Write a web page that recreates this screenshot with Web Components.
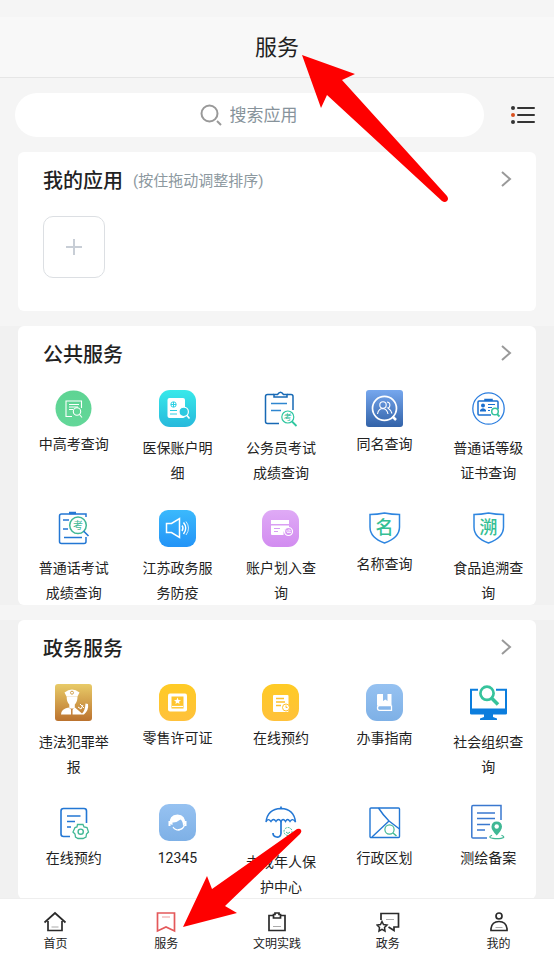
<!DOCTYPE html>
<html lang="zh-CN">
<head>
<meta charset="utf-8">
<meta name="viewport" content="width=device-width, initial-scale=1">
<title>服务</title>
<style>
  html, body {
    margin: 0;
    height: 100%;
  }

  body {
    font-family: Roboto, "Noto Sans CJK SC", sans-serif;
    color: #222;
    background: #f5f5f5;
  }
</style>
</head>
<body>
<service-app>
  <page-header slot="header">服务</page-header>
  <search-bar placeholder="搜索应用"></search-bar>
  <service-card heading="我的应用" hint="(按住拖动调整排序)">
    <add-button></add-button>
  </service-card>
  <service-card heading="公共服务" shaded>
    <app-grid>
      <app-tile icon="exam" label="中高考查询"></app-tile>
      <app-tile icon="medical" label="医保账户明细"></app-tile>
      <app-tile icon="civil" label="公务员考试成绩查询"></app-tile>
      <app-tile icon="people" label="同名查询"></app-tile>
      <app-tile icon="certificate" label="普通话等级证书查询"></app-tile>
      <app-tile icon="mandarin" label="普通话考试成绩查询"></app-tile>
      <app-tile icon="speaker" label="江苏政务服务防疫"></app-tile>
      <app-tile icon="account" label="账户划入查询"></app-tile>
      <app-tile icon="name" label="名称查询"></app-tile>
      <app-tile icon="trace" label="食品追溯查询"></app-tile>
    </app-grid>
  </service-card>
  <service-card heading="政务服务" shaded>
    <app-grid>
      <app-tile icon="police" label="违法犯罪举报"></app-tile>
      <app-tile icon="licence" label="零售许可证"></app-tile>
      <app-tile icon="booking" label="在线预约"></app-tile>
      <app-tile icon="guide" label="办事指南"></app-tile>
      <app-tile icon="monitor" label="社会组织查询"></app-tile>
      <app-tile icon="settings" label="在线预约"></app-tile>
      <app-tile icon="hotline" label="12345"></app-tile>
      <app-tile icon="umbrella" label="未成年人保护中心"></app-tile>
      <app-tile icon="district" label="行政区划"></app-tile>
      <app-tile icon="survey" label="测绘备案"></app-tile>
    </app-grid>
  </service-card>
  <tab-bar slot="footer"></tab-bar>
  <guide-arrows slot="overlay"></guide-arrows>
</service-app>

<script>
const gradient = (id, from, to) => `
  <linearGradient id="${id}" x1="0" y1="0" x2="0" y2="1">
    <stop stop-color="${from}"/><stop offset="1" stop-color="${to}"/>
  </linearGradient>`

const tileBase = (from, to, radius) => `
  ${gradient('bg', from, to)}
  <rect width="37" height="37" rx="${radius}" fill="url(#bg)"/>`

const shield = char => `
  <path d="M4 4.500Q11 4.500 18.500 3Q26 4.500 33.500 4.500V17C33.500 25 27 30 18.500 33C10 30 4 25 4 17Z" stroke="#2f86e0" stroke-width="1.500"/>
  <text x="18.500" y="24" font-size="18" font-weight="500" text-anchor="middle" fill="#35bf94">${char}</text>`

// tile icons, drawn on a 37x37 grid
const ICONS = {
  exam: `
    ${gradient('bg', '#5ed493', '#63d799')}
    <circle cx="18.500" cy="18.500" r="18" fill="url(#bg)"/>
    <g stroke="#fff" stroke-width="1.100">
      <path d="M17 26.500H11V11H26.500V18M14 14.500H24M14 17H23M14 19.500H18"/>
      <circle cx="22" cy="21.500" r="3.700"/><path d="M24.500 24.500L27 27.500"/>
    </g>`,
  medical: `
    ${tileBase('#38e9ea', '#27b9dc', 11)}
    <rect x="8.500" y="8" width="17.500" height="20" rx="2" fill="#fff"/>
    <circle cx="14.500" cy="14.500" r="2.700" stroke="#2ccfe3"/>
    <path d="M14.500 12V17M12 14.500H17M11 20.500H18M11 24H18" stroke="#2ccfe3"/>
    <circle cx="24.700" cy="21.800" r="4.700" fill="#2bc9e0" stroke="#fff" stroke-width="1.200"/>
    <path d="M28 25.500L30.500 28.500" stroke="#fff" stroke-width="1.600"/>`,
  civil: `
    <path d="M12 4.500H5.500Q3.500 4.500 3.500 6.500V31.500Q3.500 33.500 5.500 33.500H17M25 4.500H29Q31 4.500 31 6.500V20" stroke="#1769b5" stroke-width="1.500"/>
    <path d="M12 7V4.500H15.500Q18.500 0 21.500 4.500H25V7Z" stroke="#1769b5" stroke-width="1.500"/>
    <path d="M9 13.500H25M9 20.500H19" stroke="#2f86d0" stroke-width="1.400"/>
    <circle cx="25.800" cy="27" r="6" stroke="#2fc7a0" stroke-width="1.200"/>
    <path d="M30 31.500L34.500 36" stroke="#2fc7a0" stroke-width="1.800"/>
    <text x="25.800" y="30" font-size="8" text-anchor="middle" fill="#20b78f">考</text>`,
  people: `
    ${tileBase('#76a7ee', '#3262a8', 3)}
    <circle cx="18.500" cy="18.300" r="12" stroke="#fff" stroke-width="1.700"/>
    <path d="M26.500 26.500L30 30" stroke="#fff" stroke-width="2.500"/>
    <g stroke="#fff" stroke-width="1.100">
      <circle cx="17" cy="15" r="3.200"/>
      <path d="M11.500 24Q12.500 18.500 17 18.500Q21 19 22 24M21 12Q25 12.500 23.500 17Q22.500 18 22 18Q25 20 26 23.500"/>
    </g>`,
  certificate: `
    <circle cx="18.500" cy="18.500" r="15.700" stroke="#2d7fdf" stroke-width="1.300"/>
    <path d="M21 25H9Q8 25 8 24V12Q8 11 9 11H27Q28 11 28 12V19M15 11V9.500H22V11" stroke="#1b70cf" stroke-width="1.500"/>
    <circle cx="13" cy="15.500" r="2" fill="#1b70cf"/>
    <path d="M10 21.500V20Q13 16.500 16 20V21.500Z" fill="#1b70cf"/>
    <path d="M18 14.500H25M18 17.500H22M18 20.500H20" stroke="#1b70cf" stroke-width="1.200"/>
    <circle cx="25" cy="21.500" r="3.300" stroke="#37c39d" stroke-width="1.500"/>
    <path d="M27 24L29.500 26.500" stroke="#37c39d" stroke-width="1.800"/>`,
  mandarin: `
    <path d="M31 27V31.500Q31 33.500 29 33.500H6.500Q4.500 33.500 4.500 31.500V6Q4.500 4 6.500 4H31V7" stroke="#2377d4" stroke-width="1.500"/>
    <path d="M14 3H21" stroke="#2377d4" stroke-width="2.500"/>
    <path d="M8 10H14M8 19H13M9 27.500H27" stroke="#2377d4" stroke-width="1.500"/>
    <circle cx="23" cy="15.300" r="8.300" stroke="#40b895" stroke-width="1.500"/>
    <path d="M28.500 21L33.500 26" stroke="#2377d4" stroke-width="1.600"/>
    <text x="23" y="19" font-size="10" text-anchor="middle" fill="#40b895">考</text>`,
  speaker: `
    ${tileBase('#3bb9fc', '#2394f7', 9)}
    <path d="M7.500 13.500H12.500L20.500 8.500V27.500L12.500 22.500H7.500Z" stroke="#fff" stroke-width="1.500"/>
    <path d="M23 15.500Q25 18 23 21M24.500 12.500Q29 18 24.500 24" stroke="#fff" stroke-width="1.400"/>
    <path d="M27 11.500Q32 18 27 25" stroke="#fff" stroke-width=".8"/>`,
  account: `
    ${tileBase('#dfaaf6', '#d28cf0', 11)}
    <path d="M9 10H27V14H9ZM9 15.500H27V17Q21 18 21.500 25H10Q9 25 9 24Z" fill="#fff"/>
    <path d="M12 18.500H18M12 21.500H16" stroke="#d79cf3"/>
    <circle cx="26.500" cy="21.500" r="4" stroke="#fff" stroke-width="1.200"/>
    <path d="M24 21H28.500L26.500 19M29 22.500H25" stroke="#fff" stroke-width=".8"/>`,
  name: shield('名'),
  trace: shield('溯'),
  police: `
    ${tileBase('#e8cb68', '#bb722e', 3)}
    <path d="M9.500 8.500Q17 2.500 24.500 8.500L22.500 12.500H11.500Z" fill="#fff"/>
    <path d="M11.700 12.500H22.500Q22.500 18 19.800 20.500V24.500H14.300V20.500Q11.500 18 11.700 12.500Z" fill="#fff"/>
    <path d="M6 30.500Q6 25 13.500 23.500L16.800 26L20 23.500L27 29.500Q30 27 30.500 19.500L33 20Q34 26 29 30.500Z" fill="#fff"/>
    <circle cx="17" cy="8.700" r="1.500" stroke="#d3a14d"/>
    <path d="M16.800 25V31" stroke="#c68138" stroke-width="1.500"/>
    <path d="M23 23L26 25L28 21M25 20L29 24" stroke="#fff"/>`,
  licence: `
    ${tileBase('#ffcb25', '#ffc13b', 12)}
    <rect x="9" y="9.500" width="19" height="18" rx="2" fill="#fff"/>
    <rect x="12.500" y="12.500" width="12" height="12" fill="#ffc52e"/>
    <path d="M18.500 13.500L19.500 16L22 16.200L20 17.800L20.600 20L18.500 18.800L16.400 20L17 17.800L15 16.200L17.500 16Z" fill="#fff"/>
    <path d="M13 22.500H24" stroke="#fff" stroke-width="1.200"/>`,
  booking: `
    ${tileBase('#ffcb25', '#ffc13b', 12)}
    <rect x="11" y="11" width="15.500" height="17" rx="1" fill="#fff"/>
    <path d="M14 14.500H22M14 18H23M14 21.500H19" stroke="#ffc12e" stroke-width="1.400"/>
    <circle cx="24" cy="23.500" r="3.500" fill="#fff" stroke="#ffc12e"/>
    <path d="M24 21.500V23.500H25.500" stroke="#ffc12e"/>`,
  guide: `
    ${tileBase('#96c2f1', '#7eb0e6', 11)}
    <path d="M11 11Q11 10 12 10H17V17L19.300 15.500L21.500 17V10H25.500V21H13Q12 21 11 22Z" fill="#fff"/>
    <path d="M25.500 21.500H13.500Q11.500 21.500 11.500 24Q11.500 26.300 13.500 26.300H25.500V21.500" stroke="#fff" stroke-width="1.300"/>`,
  monitor: `
    <path d="M8 5.800H1V28.500H36V5.800H26" stroke="#0b7ddd" stroke-width="2"/>
    <path d="M0 24.500H37V29Q37 30.500 35.500 30.500H23V33L27 34.500V36H10V34.500L14 33V30.500H1.500Q0 30.500 0 29Z" fill="#0b7ddd"/>
    <circle cx="17" cy="9.300" r="6.600" stroke="#36c39c" stroke-width="2.700"/>
    <path d="M22 14.500L28 20.500" stroke="#36c39c" stroke-width="3.500"/>`,
  settings: `
    <path d="M15 32.500H8.500Q6 32.500 6 30V7Q6 4.500 8.500 4.500H29Q31.500 4.500 31.500 7V19" stroke="#2377d4" stroke-width="1.600"/>
    <path d="M12 12H25.500M12 17.500H20M12 23H16" stroke="#2377d4" stroke-width="1.600"/>
    <path d="M22.500 20.500H28L29 23L32 23.500L33.500 28L31.500 30L31 33L28 34.500H23L20.500 33L20 30L18 28L20 23.500L22 23Z" stroke="#40b895" stroke-width="1.300"/>
    <circle cx="25.700" cy="27.700" r="2.600" stroke="#40b895" stroke-width="1.400"/>`,
  hotline: `
    ${tileBase('#96c2f1', '#7eb0e6', 10)}
    <path d="M11 20Q9.500 11 18.500 10.500Q27 11 26 20L24 22Q24 17 21.500 15.500Q17 19 13.500 18.500V21Z" fill="#fff"/>
    <path d="M10.500 17V22M26.500 17V22" stroke="#fff" stroke-width="2"/>
    <path d="M25.500 21Q24 26 19 25.500M14 23Q16 26.500 21 26" stroke="#fff" stroke-width="1.200"/>`,
  umbrella: `
    <path d="M4 18Q5.500 5 19 4.500Q32 5 33.500 18Q30.500 13.500 28 17.500Q25.500 13.500 23.500 17.500Q21 13.500 19 17.500Q16.500 13.500 14 17.500Q11.500 13.500 9 17.500Q6 13.500 4 18Z" stroke="#2377d4" stroke-width="1.400"/>
    <path d="M19 2.500V4.500M19 17V29.500Q18.500 33.500 14.500 33Q11 32.500 11 29" stroke="#2377d4" stroke-width="1.700"/>
    <circle cx="26" cy="27.500" r="4" stroke="#40b895" stroke-dasharray="2 1"/>
    <path d="M24 28Q26 31 28 28" stroke="#40b895"/>`,
  district: `
    <rect x="4" y="4" width="29.500" height="29.500" rx="1" stroke="#2377d4" stroke-width="1.400"/>
    <path d="M12.500 4Q17 11 23 17L6 33M23 17L33.500 25" stroke="#2377d4" stroke-width="1.400"/>
    <circle cx="23.500" cy="25.500" r="4.600" stroke="#40b895" stroke-width="1.200"/>
    <path d="M27 29L30.500 32" stroke="#40b895" stroke-width="1.500"/>`,
  survey: `
    <path d="M17 34H3Q1.800 34 1.800 33V3Q1.800 1.500 3 1.500H31V16" stroke="#3a78cf" stroke-width="1.500"/>
    <path d="M7 9H25M7 14.500H25M7 20.500H20M7 26H15" stroke="#3a78cf" stroke-width="1.500"/>
    <path d="M26.700 31.500Q21 25.500 21.500 22.500Q22 17.500 26.700 17.500Q31.500 17.500 32 22.500Q32 26 26.700 31.500Z" fill="#40b895"/>
    <circle cx="26.700" cy="22.500" r="2.200" fill="#fff"/>
    <path d="M22 31.200Q17 33.500 23 34.300Q27 34.800 31 34.300Q36.500 33.500 31.500 31.200" stroke="#40b895" stroke-width="1.200"/>`
}

// tab icons, drawn on a 24x24 grid
const TABS = [
  {
    label: '首页',
    icon: '<path d="M1.500 12.500L12 3L22.500 12.500M5 11V20.500H19V11"/><path d="M8.500 17H15.500" stroke="#aaa" stroke-width="1"/>'
  },
  {
    label: '服务',
    active: true,
    icon: '<path d="M3.500 3H20.500V21L12 17L3.500 21Z"/><path d="M8 7H16" stroke-width="1" opacity=".6"/>'
  },
  {
    label: '文明实践',
    icon: '<path d="M8.500 5.500H4V20.500H20V5.500H15.500"/><path d="M8.500 8V4.500H10V3H14V4.500H15.500V8Z"/><path d="M8 16.500H16" stroke="#aaa" stroke-width="1"/>'
  },
  {
    label: '政务',
    icon: '<path d="M5 10V3.500H22.500V17H18V20.500L12.500 17"/><path d="M10 9.500H18" stroke="#aaa" stroke-width="1"/><path d="M6 11.500L7.500 14.500L11 15L8.500 17.500L9 21L6 19.300L3 21L3.500 17.500L1 15L4.500 14.500Z" stroke-width="1.500"/>'
  },
  {
    label: '我的',
    icon: '<circle cx="12" cy="6" r="3"/><path d="M4 20.500V18.500Q5 11.500 12 11.500Q19 11.500 20 18.500V20.500Z"/><path d="M8.500 17.500H15.500" stroke="#aaa" stroke-width="1"/>'
  }
]

class ServiceApp extends HTMLElement {
  constructor () {
    super()
    this.attachShadow({ mode: 'open' }).innerHTML = `
      <style>
        :host {
          display: flex;
          flex-direction: column;
          position: relative;
          height: 100vh;
          overflow: hidden;
        }

        main {
          flex: 1;
          min-height: 0;
          display: flex;
          flex-direction: column;
          gap: 15px;
          padding-top: 15px;
          overflow-y: auto;
          scrollbar-width: none;
        }
      </style>
      <slot name="header"></slot>
      <main><slot></slot></main>
      <slot name="footer"></slot>
      <slot name="overlay"></slot>
    `
  }
}

class PageHeader extends HTMLElement {
  constructor () {
    super()
    this.attachShadow({ mode: 'open' }).innerHTML = `
      <style>
        :host {
          display: block;
          padding-top: 17px;
        }

        h1 {
          margin: 0;
          padding-top: 2px;
          background: #f8f8f8;
          border-bottom: 1px solid #e6e6e6;
          font-size: 22px;
          font-weight: 400;
          line-height: 58px;
          text-align: center;
        }
      </style>
      <h1><slot></slot></h1>
    `
  }
}

class SearchBar extends HTMLElement {
  constructor () {
    super()
    this.attachShadow({ mode: 'open' })
  }

  connectedCallback () {
    const placeholder = this.getAttribute('placeholder')
    this.shadowRoot.innerHTML = `
      <style>
        :host {
          display: flex;
          align-items: center;
          gap: 26px;
          flex-shrink: 0;
          padding: 0 18px 0 15px;
        }

        label {
          flex: 1;
          display: flex;
          align-items: center;
          justify-content: center;
          gap: 8px;
          height: 44px;
          border-radius: 22px;
          background: #fff;
        }

        input {
          width: 70px;
          padding: 0;
          border: 0;
          outline: 0;
          background: none;
          font: inherit;
          font-size: 17px;
          line-height: 24px;
          color: #222;
        }

        input::placeholder {
          color: #87939b;
          opacity: 1;
        }

        button {
          padding: 0;
          border: 0;
          background: none;
          line-height: 0;
          cursor: pointer;
        }
      </style>
      <label>
        <svg width="22" height="22" viewBox="0 0 22 22" fill="none" stroke="#999" stroke-width="2">
          <circle cx="9.500" cy="9.500" r="8"/><path d="M17 17L21 21"/>
        </svg>
        <input type="text" placeholder="${placeholder}" aria-label="${placeholder}">
      </label>
      <button type="button" aria-label="列表">
        <svg width="26" height="20" viewBox="0 0 26 20" fill="none">
          <circle cx="3" cy="3" r="2" fill="#333"/>
          <circle cx="3" cy="10" r="2" fill="#d9501e"/>
          <circle cx="3" cy="17" r="2" fill="#333"/>
          <path d="M8 3H24M8 10H24M8 17H24" stroke="#333" stroke-width="2" stroke-linecap="round"/>
        </svg>
      </button>
    `
  }
}

class ServiceCard extends HTMLElement {
  constructor () {
    super()
    this.attachShadow({ mode: 'open' })
  }

  connectedCallback () {
    const heading = this.getAttribute('heading')
    const hint = this.getAttribute('hint')
    this.shadowRoot.innerHTML = `
      <style>
        :host {
          display: block;
          flex-shrink: 0;
          padding: 0 18px;
        }

        :host([shaded]) {
          background: #f1f1f1;
        }

        section {
          border-radius: 6px;
          background: #fff;
        }

        header {
          display: flex;
          align-items: center;
          gap: 10px;
          height: 54px;
          margin-bottom: 10px;
          padding: 0 24px 0 25px;
        }

        h2 {
          margin: 0;
          font-size: 20px;
          font-weight: 500;
        }

        small {
          font-size: 15px;
          color: #8d999f;
        }

        a {
          margin-left: auto;
          line-height: 0;
        }
      </style>
      <section>
        <header>
          <h2>${heading}</h2>
          ${hint ? `<small>${hint}</small>` : ''}
          <a href="#" aria-label="${heading}">
            <svg width="12" height="16" viewBox="0 0 12 16" fill="none" stroke="#999" stroke-width="2">
              <path d="M2 1L10 8L2 15"/>
            </svg>
          </a>
        </header>
        <slot></slot>
      </section>
    `
  }
}

class AddButton extends HTMLElement {
  constructor () {
    super()
    this.attachShadow({ mode: 'open' }).innerHTML = `
      <style>
        :host {
          display: block;
          padding: 0 25px 33px;
        }

        button {
          display: grid;
          place-items: center;
          width: 62px;
          height: 62px;
          padding: 0;
          border: 1px solid #dcdfe3;
          border-radius: 10px;
          background: #fff;
          cursor: pointer;
        }
      </style>
      <button type="button" aria-label="添加">
        <svg width="16" height="16" viewBox="0 0 16 16" stroke="#c8ced6" stroke-width="2">
          <path d="M8 0V16M0 8H16"/>
        </svg>
      </button>
    `
  }
}

class AppGrid extends HTMLElement {
  constructor () {
    super()
    this.attachShadow({ mode: 'open' }).innerHTML = `
      <style>
        :host {
          display: grid;
          grid-template-columns: repeat(5, 1fr);
          grid-auto-rows: 95px;
          row-gap: 25px;
          margin: 0 -4px 0 4px;
        }
      </style>
      <slot></slot>
    `
  }
}

class AppTile extends HTMLElement {
  constructor () {
    super()
    this.attachShadow({ mode: 'open' })
  }

  connectedCallback () {
    const label = this.getAttribute('label')
    const long = label.length > 5
    this.shadowRoot.innerHTML = `
      <style>
        :host {
          display: block;
        }

        a {
          display: flex;
          flex-direction: column;
          align-items: center;
          gap: 9px;
          color: #222;
          text-decoration: none;
        }

        span {
          width: 70px;
          font-size: 14px;
          line-height: 17px;
          text-align: center;
        }

        .long {
          line-height: 25px;
        }
      </style>
      <a href="#">
        <svg width="37" height="37" viewBox="0 0 37 37" fill="none" aria-hidden="true">${ICONS[this.getAttribute('icon')]}</svg>
        <span class="${long ? 'long' : ''}">${label}</span>
      </a>
    `
  }
}

class TabBar extends HTMLElement {
  constructor () {
    super()
    this.attachShadow({ mode: 'open' }).innerHTML = `
      <style>
        :host {
          display: block;
          border-top: 1px solid #eee;
          background: #fff;
        }

        nav {
          display: flex;
        }

        a {
          flex: 1;
          display: flex;
          flex-direction: column;
          align-items: center;
          gap: 2px;
          padding: 11px 0 6px;
          font-size: 12px;
          line-height: 16px;
          color: #222;
          text-decoration: none;
        }

        svg {
          fill: none;
          stroke: #2b2b2b;
          stroke-width: 1.7;
        }

        .active svg {
          stroke: #e4585a;
        }
      </style>
      <nav>
        ${TABS.map(tab => `
          <a href="#" class="${tab.active ? 'active' : ''}">
            <svg width="24" height="24" viewBox="0 0 24 24">${tab.icon}</svg>
            <span>${tab.label}</span>
          </a>
        `).join('')}
      </nav>
    `
  }
}

// red arrows lying over the page
class GuideArrows extends HTMLElement {
  constructor () {
    super()
    this.attachShadow({ mode: 'open' }).innerHTML = `
      <style>
        :host {
          position: absolute;
          inset: 0;
          pointer-events: none;
        }
      </style>
      <svg width="554" height="958" viewBox="0 0 554 958" fill="#fe0000" aria-hidden="true">
        <path d="M302 55L355 74L342 80L447 196Q449 199 447 201Q445 203 442 201L327 95L321 108Z"/>
        <path d="M183 927L207 876L212 889L297 829Q300 828 301 830Q302 832 300 834L225 906L237 913Z"/>
      </svg>
    `
  }
}

customElements.define('service-app', ServiceApp)
customElements.define('page-header', PageHeader)
customElements.define('search-bar', SearchBar)
customElements.define('service-card', ServiceCard)
customElements.define('add-button', AddButton)
customElements.define('app-grid', AppGrid)
customElements.define('app-tile', AppTile)
customElements.define('tab-bar', TabBar)
customElements.define('guide-arrows', GuideArrows)
</script>
</body>
</html>
